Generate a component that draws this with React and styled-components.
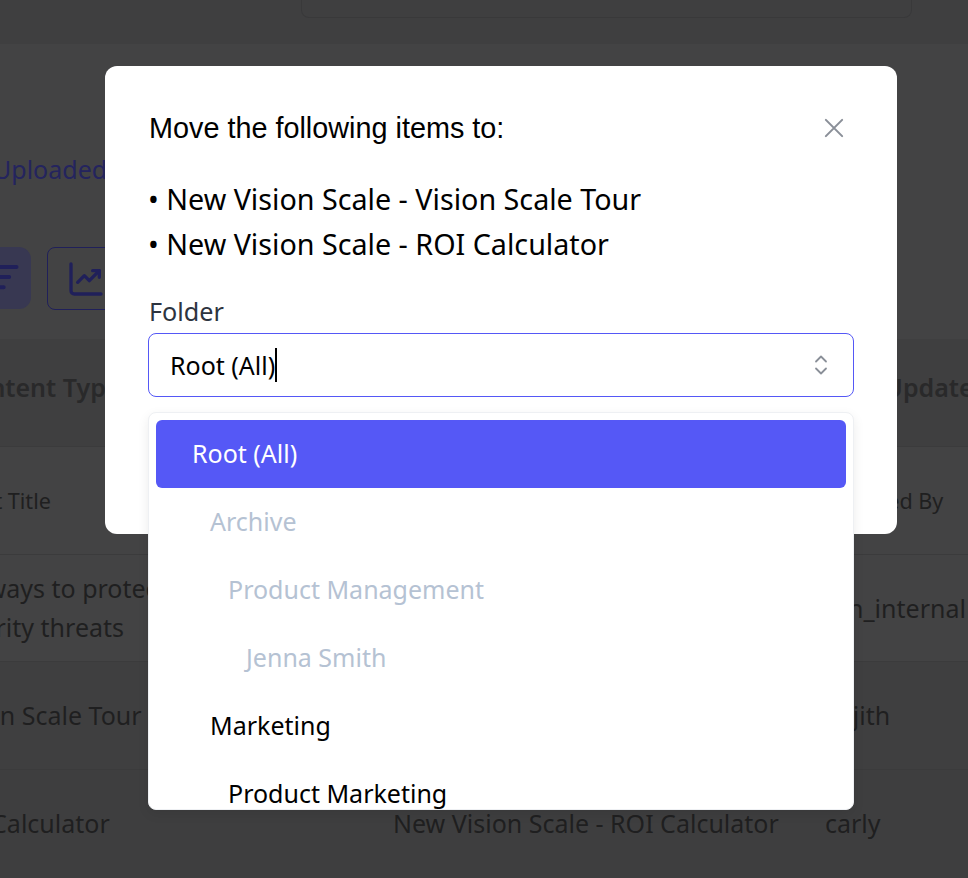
import styled, { createGlobalStyle } from 'styled-components';

const GlobalStyle = createGlobalStyle`
  html, body {
    margin: 0;
    padding: 0;
    background: #434344;
  }
  * {
    box-sizing: border-box;
  }
`;

const Page = styled.div`
  position: relative;
  width: 968px;
  height: 878px;
  overflow: hidden;
  background: #434344;
  font-family: "Noto Sans", "Open Sans", sans-serif;
  color: #1f1f20;
`;

const TopBand = styled.div`
  height: 44px;
  padding-left: 301px;
  background: #3f3f40;
`;

const TopCard = styled.div`
  width: 611px;
  height: 18px;
  border: 1px solid #39393a;
  border-top: none;
  border-radius: 0 0 8px 8px;
`;

const TabRow = styled.div`
  height: 203px;
  padding-top: 107px;
  margin-left: -7px;
  font-size: 25px;
  line-height: 36px;
  color: #24245e;
`;

const Toolbar = styled.div`
  display: flex;
  gap: 16px;
  height: 92px;
  margin-left: -31px;
`;

const FilterButton = styled.div`
  display: flex;
  align-items: center;
  justify-content: center;
  width: 62px;
  height: 62px;
  border-radius: 12px;
  background: #383852;
  color: #20205a;
`;

const ChartButton = styled.div`
  display: flex;
  align-items: center;
  justify-content: center;
  width: 78px;
  height: 63px;
  border: 1px solid #20205a;
  border-radius: 8px;
  color: #20205a;
`;

const Row = styled.div`
  display: grid;
  grid-template-columns: 393px 432px 1fr;
  align-items: center;
  height: ${props => props.$height}px;
  padding-bottom: ${props => props.$lift || 0}px;
  background: ${props => props.$bg || 'transparent'};
  border-bottom: 1px solid ${props => props.$noLine ? 'transparent' : '#3b3b3c'};
  font-size: ${props => props.$size || 25}px;
  line-height: 39px;
  font-weight: ${props => props.$bold ? 600 : 400};
  color: ${props => props.$bold ? '#29292a' : '#1f1f20'};
  white-space: nowrap;
`;

const Cell = styled.div`
  margin-left: ${props => props.$shift || 0}px;
`;

const Backdrop = styled.div`
  position: absolute;
  inset: 0;
`;

const Modal = styled.div`
  position: absolute;
  left: 105px;
  top: 66px;
  width: 792px;
  height: 468px;
  padding: 0 43px;
  background: #fff;
  border-radius: 12px;
`;

const ModalHeader = styled.div`
  display: flex;
  align-items: center;
  justify-content: space-between;
  height: 62px;
  margin-top: 31px;
`;

const ModalTitle = styled.h2`
  margin: 0 0 0 1px;
  font-family: "Liberation Sans", Arial, sans-serif;
  font-size: 28.8px;
  font-weight: 400;
  color: #000;
`;

const CloseIcon = styled.svg`
  width: 26px;
  height: 26px;
  margin-right: 7px;
  color: #8a8f98;
`;

const ItemList = styled.ul`
  margin: 17px 0 0;
  padding: 0;
  list-style: none;
  font-size: 28.7px;
  line-height: 45px;
  color: #000;
`;

const FieldLabel = styled.label`
  display: block;
  margin: 28px 0 0 1px;
  font-size: 25.2px;
  line-height: 34px;
  font-weight: 400;
  color: #2d3440;
`;

const FieldWrap = styled.div`
  position: relative;
  margin-top: 5px;
`;

const SelectBox = styled.div`
  display: flex;
  align-items: center;
  justify-content: space-between;
  height: 64px;
  padding: 0 22px 0 21px;
  border: 1.5px solid #5558f6;
  border-radius: 8px;
  font-size: 25px;
  color: #000;
`;

const ValueText = styled.span`
  border-right: 2px solid #000;
  line-height: 34px;
`;

const ChevronIcon = styled.svg`
  width: 24px;
  height: 24px;
  margin-right: -2px;
  color: #8a8f98;
`;

const Dropdown = styled.div`
  position: absolute;
  left: 0;
  right: 0;
  top: 79px;
  height: 398px;
  padding: 7px;
  overflow: hidden;
  background: #fff;
  border: 1px solid #eef0f3;
  border-radius: 8px;
  box-shadow: 0 4px 12px rgba(0, 0, 0, 0.08);
`;

const Option = styled.div`
  display: flex;
  align-items: center;
  flex-shrink: 0;
  height: 68px;
  padding: 0 0 2px ${props => 36 + props.$level * 18}px;
  border-radius: 6px;
  font-size: 25px;
  background: ${props => props.$selected ? '#5558f6' : 'transparent'};
  color: ${props => props.$selected ? '#fff' : props.$muted ? '#b5c2d3' : '#000'};
`;

const folders = [
  { name: 'Root (All)', level: 0, selected: true },
  { name: 'Archive', level: 1, muted: true },
  { name: 'Product Management', level: 2, muted: true },
  { name: 'Jenna Smith', level: 3, muted: true },
  { name: 'Marketing', level: 1 },
  { name: 'Product Marketing', level: 2 },
];

const App = () => {
  return (
    <Page>
      <GlobalStyle />
      <TopBand>
        <TopCard />
      </TopBand>
      <TabRow>Uploaded</TabRow>
      <Toolbar>
        <FilterButton>
          <svg width="44" height="44" viewBox="0 0 24 24" fill="none" stroke="currentColor" strokeWidth="2.2" strokeLinecap="round">
            <path d="M3 6h18M7 11.5h10M10 17h4" />
          </svg>
        </FilterButton>
        <ChartButton>
          <svg width="40" height="40" viewBox="0 0 24 24" fill="none" stroke="currentColor" strokeWidth="2" strokeLinecap="round" strokeLinejoin="round">
            <path d="M3 3v16a2 2 0 0 0 2 2h16" />
            <path d="M7 14l4-4 3 3 6-6" />
            <path d="M16 7h4v4" />
          </svg>
        </ChartButton>
      </Toolbar>
      <Row $height={108} $lift={10} $bg="#3f3f40" $bold>
        <Cell $shift={-42}>Content Type</Cell>
        <div />
        <Cell $shift={2}>Last Updated</Cell>
      </Row>
      <Row $height={108} $size={21.6}>
        <Cell $shift={-79}>Content Title</Cell>
        <div />
        <Cell>Updated By</Cell>
      </Row>
      <Row $height={107}>
        <Cell $shift={-58}>
          Big ways to protect against<br />
          security threats
        </Cell>
        <div />
        <Cell>tan_internal</Cell>
      </Row>
      <Row $height={108} $bg="#3f3f40">
        <Cell $shift={-114}>New Vision Scale Tour</Cell>
        <div />
        <Cell>Sajith</Cell>
      </Row>
      <Row $height={108} $bg="#3e3e3f" $noLine>
        <Cell $shift={-59}>ROI Calculator</Cell>
        <Cell>New Vision Scale - ROI Calculator</Cell>
        <Cell>carly</Cell>
      </Row>

      <Backdrop>
        <Modal>
          <ModalHeader>
            <ModalTitle>Move the following items to:</ModalTitle>
            <CloseIcon viewBox="0 0 24 24" fill="none" stroke="currentColor" strokeWidth="1.9" strokeLinecap="round">
              <path d="M4.5 4.5l15 15M19.5 4.5l-15 15" />
            </CloseIcon>
          </ModalHeader>
          <ItemList>
            <li>• New Vision Scale - Vision Scale Tour</li>
            <li>• New Vision Scale - ROI Calculator</li>
          </ItemList>
          <FieldLabel>Folder</FieldLabel>
          <FieldWrap>
            <SelectBox>
              <ValueText>Root (All)</ValueText>
              <ChevronIcon viewBox="0 0 24 24" fill="none" stroke="currentColor" strokeWidth="1.8" strokeLinecap="round" strokeLinejoin="round">
                <path d="M7 8.5l5-5 5 5M7 15.5l5 5 5-5" />
              </ChevronIcon>
            </SelectBox>
            <Dropdown>
              {folders.map(folder => (
                <Option
                  key={folder.name}
                  $level={folder.level}
                  $selected={folder.selected}
                  $muted={folder.muted}
                >
                  {folder.name}
                </Option>
              ))}
            </Dropdown>
          </FieldWrap>
        </Modal>
      </Backdrop>
    </Page>
  );
};

export default App;
